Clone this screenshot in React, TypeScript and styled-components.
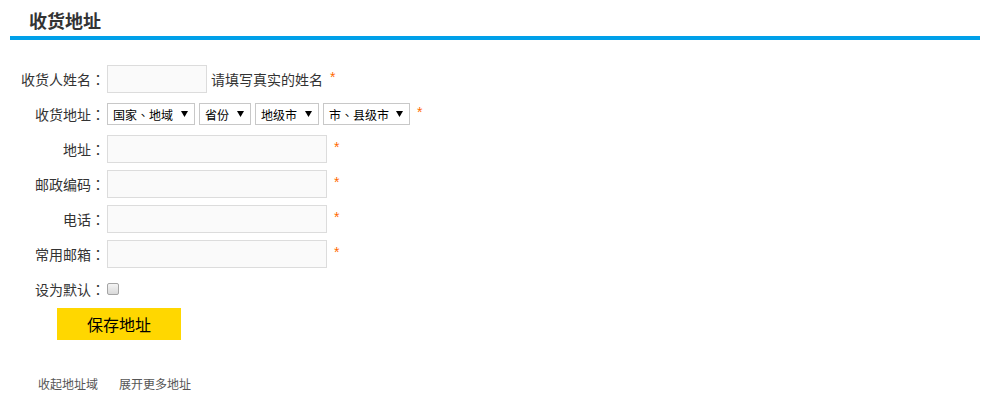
import React from "react";
import styled, { createGlobalStyle } from "styled-components";

const GlobalStyle = createGlobalStyle`
  html, body { margin: 0; padding: 0; background: #fff; }
  body {
    font-family: "Noto Sans CJK SC", "Noto Sans", "Liberation Sans", sans-serif;
    color: #333;
  }
  * { box-sizing: border-box; }
`;

const Page = styled.div`
  width: 990px;
  padding: 0 10px;
`;

const Header = styled.div`
  border-bottom: 4px solid #00a0e9;
`;

const Title = styled.h2`
  margin: 0;
  padding: 4px 0 0 19px;
  height: 36px;
  line-height: 32px;
  font-size: 18px;
  font-weight: bold;
  color: #333;
`;

const Form = styled.form`
  margin-top: 25px;
  display: flex;
  flex-direction: column;
  gap: 7px;
`;

const Row = styled.div`
  display: flex;
  align-items: center;
  height: 28px;
`;

const Label = styled.label`
  width: 95px;
  margin-right: 2px;
  text-align: right;
  font-size: 14px;
  color: #333;
  white-space: nowrap;
`;

/* centred full-width punctuation, as in the reference */
const Punct = styled.span`
  font-family: "Noto Sans CJK TC", "Noto Sans CJK SC", sans-serif;
`;

const TextInput = styled.input<{ $w: number }>`
  width: ${(p) => p.$w}px;
  height: 28px;
  border: 1px solid #dcdcdc;
  background: #fafafa;
  padding: 0 6px;
  font-size: 14px;
  outline: none;
`;

const Hint = styled.span`
  margin-left: 4px;
  font-size: 14px;
  color: #333;
`;

const Star = styled.span`
  margin-left: 7px;
  margin-bottom: 4px;
  font-family: "Liberation Sans", sans-serif;
  font-size: 14px;
  color: #ff6a00;
`;

const Selects = styled.div`
  display: flex;
  gap: 4px;
`;

const SelectBox = styled.div<{ $w: number }>`
  width: ${(p) => p.$w}px;
  height: 22px;
  border: 1px solid #c8c8c8;
  background: #fff;
  display: flex;
  align-items: center;
  justify-content: space-between;
  padding: 0 6px 0 5px;
  font-size: 12px;
  color: #000;
  white-space: nowrap;
`;

const Check = styled.input`
  appearance: none;
  -webkit-appearance: none;
  margin: 0;
  width: 12px;
  height: 12px;
  border: 1px solid #a5a5a5;
  border-radius: 2px;
  background: linear-gradient(#f4f4f4, #d9d9d9);
`;

const SaveButton = styled.button`
  margin: 5px 0 0 47px;
  width: 124px;
  height: 32px;
  border: none;
  background: #ffd700;
  color: #000;
  font-family: "Noto Sans CJK SC", sans-serif;
  font-size: 16px;
  padding: 0;
  cursor: pointer;
`;

const Links = styled.div`
  margin: 34px 0 0 28px;
  display: flex;
  gap: 21px;
  line-height: 20px;
`;

const LinkItem = styled.a`
  font-size: 12px;
  color: #555;
  text-decoration: none;
`;

const Arrow = () => (
  <svg width="7" height="6" viewBox="0 0 7 6">
    <path d="M0 0 H7 L3.5 6 Z" fill="#000" />
  </svg>
);

const selects = [
  { a: "国家", b: "地域", w: 88 },
  { a: "省份", b: "", w: 52 },
  { a: "地级市", b: "", w: 64 },
  { a: "市", b: "县级市", w: 87 },
];

const inputRows = ["地址", "邮政编码", "电话", "常用邮箱"];

const LabelText = ({ text }: { text: string }) => (
  <Label>
    {text}
    <Punct>：</Punct>
  </Label>
);

export default function App() {
  return (
    <Page>
      <GlobalStyle />
      <Header>
        <Title>收货地址</Title>
      </Header>
      <Form onSubmit={(e) => e.preventDefault()}>
        <Row>
          <LabelText text="收货人姓名" />
          <TextInput $w={100} />
          <Hint>请填写真实的姓名</Hint>
          <Star>*</Star>
        </Row>
        <Row>
          <LabelText text="收货地址" />
          <Selects>
            {selects.map((s) => (
              <SelectBox key={s.a} $w={s.w}>
                <span>
                  {s.a}
                  {s.b && (
                    <>
                      <Punct>、</Punct>
                      {s.b}
                    </>
                  )}
                </span>
                <Arrow />
              </SelectBox>
            ))}
          </Selects>
          <Star>*</Star>
        </Row>
        {inputRows.map((l) => (
          <Row key={l}>
            <LabelText text={l} />
            <TextInput $w={220} />
            <Star>*</Star>
          </Row>
        ))}
        <Row>
          <LabelText text="设为默认" />
          <Check type="checkbox" />
        </Row>
      </Form>
      <SaveButton type="button">保存地址</SaveButton>
      <Links>
        <LinkItem href="#">收起地址域</LinkItem>
        <LinkItem href="#">展开更多地址</LinkItem>
      </Links>
    </Page>
  );
}
